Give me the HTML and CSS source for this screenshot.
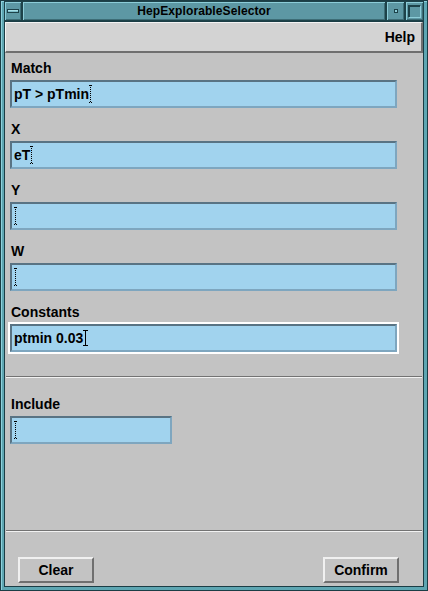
FILE: index.html
```html
<!DOCTYPE html>
<html>
<head>
<meta charset="utf-8">
<link rel="stylesheet" href="styles.css">
</head>
<body>
<div class="window">
  <div class="titlebar">
    <div class="tbtn menu-btn"><span class="bar"></span></div>
    <div class="title">HepExplorableSelector</div>
    <div class="tbtn min-btn"><span class="dot"></span></div>
    <div class="tbtn max-btn"><span class="sq"></span></div>
  </div>
  <div class="client">
    <div class="menubar"><span class="menu-item">Help</span></div>
    <div class="fields">
      <div class="field">
        <div class="label">Match</div>
        <div class="input">pT &gt; pTmin<span class="caret dotted"></span></div>
      </div>
      <div class="field">
        <div class="label">X</div>
        <div class="input">eT<span class="caret dotted"></span></div>
      </div>
      <div class="field">
        <div class="label">Y</div>
        <div class="input"><span class="caret dotted"></span></div>
      </div>
      <div class="field">
        <div class="label">W</div>
        <div class="input"><span class="caret dotted"></span></div>
      </div>
      <div class="field">
        <div class="label">Constants</div>
        <div class="input focused">ptmin 0.03<span class="caret solid"></span></div>
      </div>
    </div>
    <div class="sep first"></div>
    <div class="field include">
      <div class="label">Include</div>
      <div class="input short"><span class="caret dotted"></span></div>
    </div>
    <div class="spacer"></div>
    <div class="sep"></div>
    <div class="buttons">
      <div class="button">Clear</div>
      <div class="button">Confirm</div>
    </div>
  </div>
</div>
</body>
</html>
```

FILE: styles.css
```css
html, body {
  margin: 0;
  padding: 0;
  background: #c3c3c3;
}
body {
  font-family: "Liberation Sans", Arial, sans-serif;
  color: #000;
}
.window {
  box-sizing: border-box;
  width: 428px;
  height: 591px;
  display: flex;
  flex-direction: column;
  background: #5ea6b2;
  border: 1px solid #1b3d45;
  box-shadow: inset 1px 1px 0 #8fd2dd;
  padding: 0 3px 3px 3px;
}
.titlebar {
  height: 20px;
  display: flex;
  flex-shrink: 0;
}
.tbtn, .title {
  box-sizing: border-box;
  height: 20px;
  background: #5d98a4;
  border: 1px solid #1d4249;
  box-shadow: inset 1px 1px 0 #8ccdd8, inset -1px -1px 0 #3d6d76;
}
.tbtn {
  width: 18px;
  display: flex;
  align-items: center;
  justify-content: center;
}
.menu-btn { width: 18px; }
.min-btn { width: 19px; }
.max-btn { width: 19px; }
.bar {
  display: block;
  width: 10px;
  height: 2px;
  background: #7cbcc8;
  border: 1px solid #1d4249;
  box-shadow: inset 0 1px 0 #a8dfe8;
}
.dot {
  display: block;
  width: 2px;
  height: 2px;
  border: 1px solid #1d4249;
  background: #8ccdd8;
}
.sq {
  display: block;
  width: 11px;
  height: 11px;
  border: 1px solid;
  border-color: #1d4249 #8ccdd8 #8ccdd8 #1d4249;
  box-shadow: 1px 1px 0 #1d4249 inset;
}
.title {
  flex: 1;
  text-align: center;
  font-weight: bold;
  font-size: 12px;
  line-height: 18px;
  letter-spacing: 0.1px;
}
.client {
  flex: 1;
  display: flex;
  flex-direction: column;
  background: #c3c3c3;
  border: 1px solid #1b3d45;
}
.menubar {
  box-sizing: border-box;
  height: 31px;
  flex-shrink: 0;
  background: #d3d3d3;
  border-top: 1px solid #f4f4f4;
  border-left: 1px solid #f4f4f4;
  border-bottom: 2px solid #6f6f6f;
  border-right: 2px solid #6f6f6f;
  display: flex;
  align-items: center;
  justify-content: flex-end;
  padding-right: 6px;
}
.menu-item {
  font-weight: bold;
  font-size: 14px;
  line-height: 17px;
}
.fields {
  display: flex;
  flex-direction: column;
  gap: 13px;
  padding-top: 7px;
}
.field {
  display: flex;
  flex-direction: column;
  gap: 3px;
  padding: 0 26px 0 5px;
}
.label {
  font-weight: bold;
  font-size: 14px;
  line-height: 17px;
  padding-left: 1px;
}
.input {
  box-sizing: border-box;
  height: 28px;
  background: #a1d3ee;
  border: 2px solid;
  border-color: #597383 #7ea6bf #7ea6bf #597383;
  padding: 0 2px;
  font-weight: bold;
  font-size: 14px;
  line-height: 24px;
  display: flex;
  align-items: center;
  white-space: pre;
}
.input.focused {
  outline: 2px solid #ffffff;
}
.input.short {
  width: 162px;
}
.caret {
  display: inline-block;
  position: relative;
  width: 3px;
  height: 18px;
  margin-left: 0;
}
.caret.dotted {
  background: repeating-linear-gradient(to bottom, #000 0 1px, transparent 1px 2px) center / 1px 100% no-repeat;
}
.caret.dotted::before,
.caret.dotted::after {
  content: "";
  position: absolute;
  left: 0;
  width: 3px;
  height: 1px;
  background: repeating-linear-gradient(to right, #000 0 1px, transparent 1px 2px);
}
.caret.dotted::before { top: 0; }
.caret.dotted::after { bottom: 0; }
.caret.solid {
  width: 5px;
  height: 16px;
  background: linear-gradient(#000, #000) center / 1px 100% no-repeat;
}
.caret.solid::before,
.caret.solid::after {
  content: "";
  position: absolute;
  left: 0;
  width: 5px;
  height: 1px;
  background: #000;
}
.caret.solid::before { top: 0; }
.caret.solid::after { bottom: 0; }
.sep {
  height: 1px;
  flex-shrink: 0;
  background: #737373;
  border-bottom: 1px solid #f2f2f2;
  margin: 0 1px;
}
.sep.first {
  margin-top: 24px;
}
.include {
  margin-top: 18px;
}
.spacer {
  flex: 1;
}
.buttons {
  display: flex;
  justify-content: space-between;
  padding: 25px 24px 3px 13px;
}
.button {
  box-sizing: border-box;
  width: 76px;
  height: 26px;
  background: #c3c3c3;
  border: 2px solid;
  border-color: #f0f0f0 #6f6f6f #6f6f6f #f0f0f0;
  font-weight: bold;
  font-size: 14px;
  line-height: 22px;
  text-align: center;
}
```
